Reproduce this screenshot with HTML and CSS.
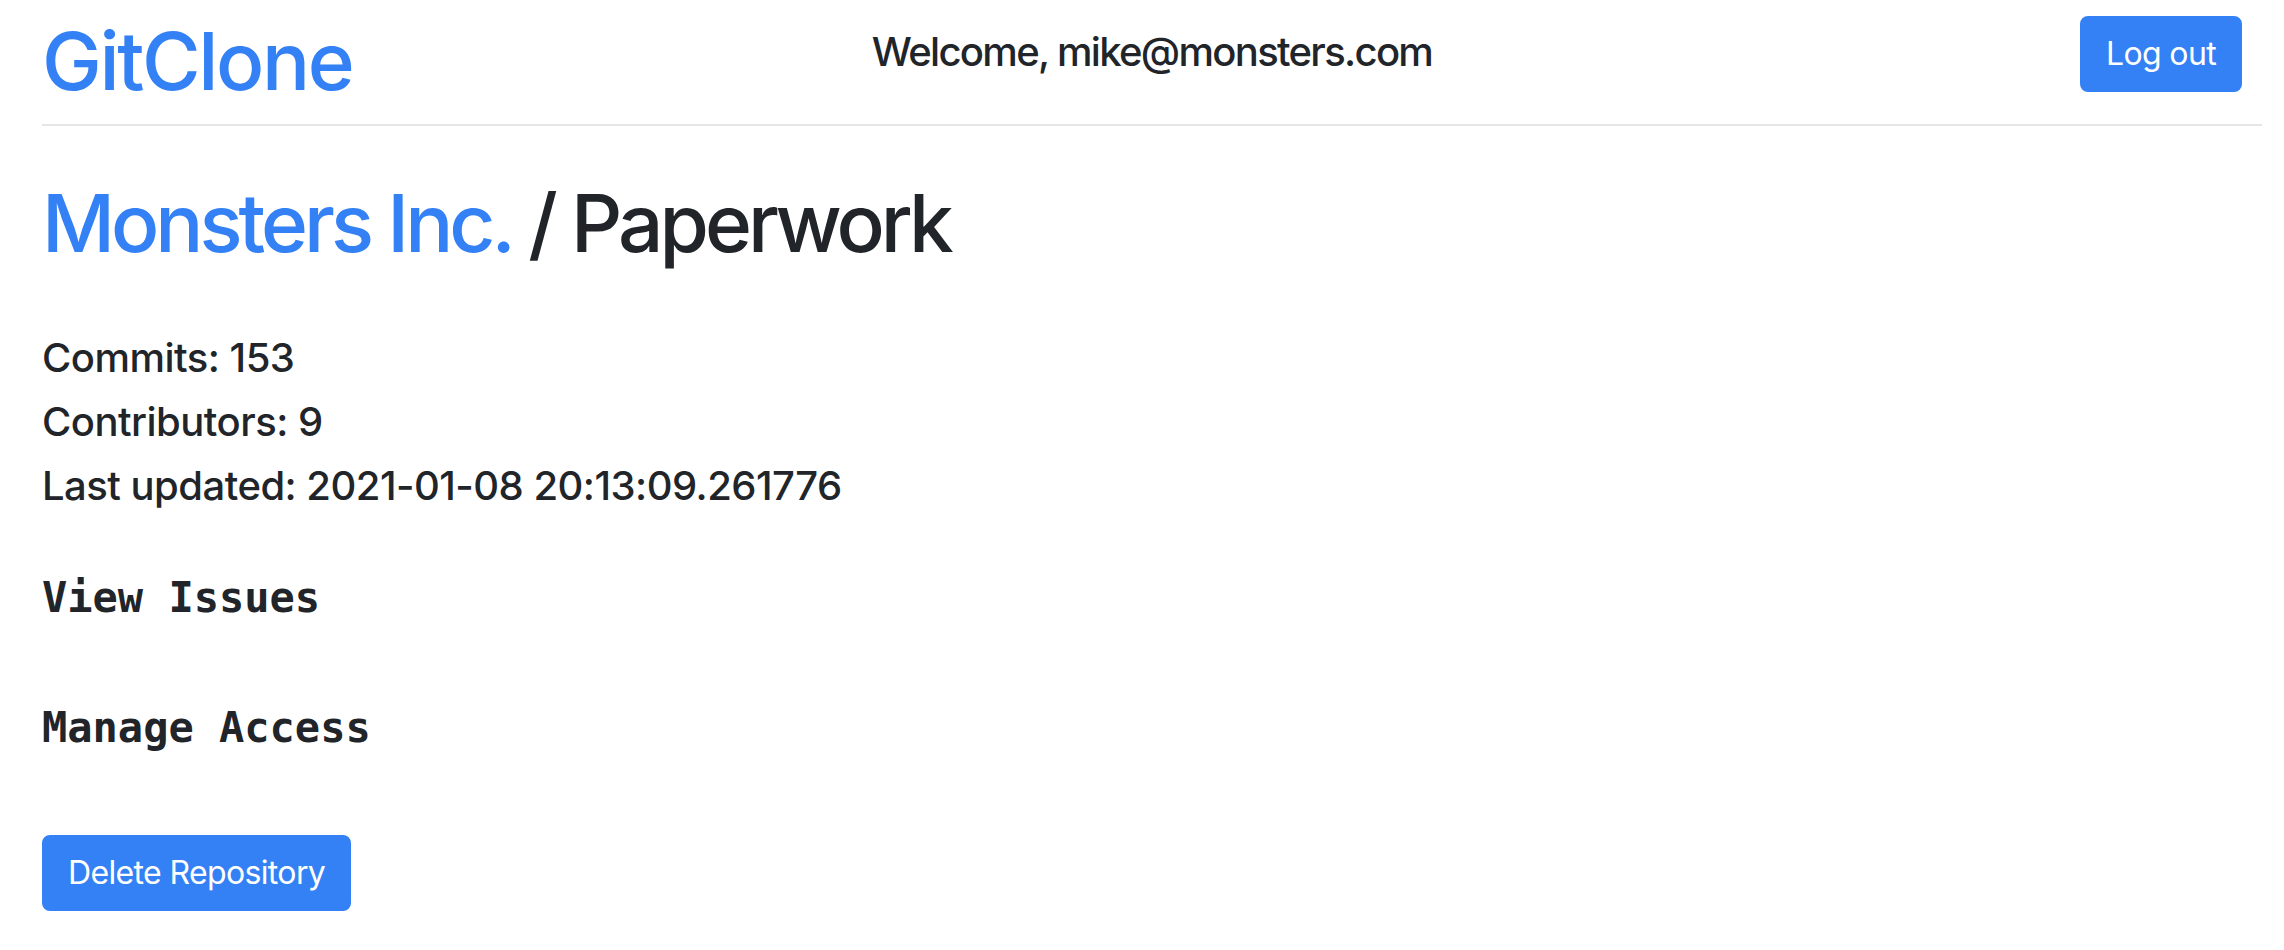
FILE: index.html
```html
<!DOCTYPE html>
<html lang="en">
<head>
<meta charset="utf-8">
<title>GitClone - Paperwork</title>
<link rel="stylesheet" href="styles.css">
</head>
<body>
<div class="page">
  <header class="topbar">
    <h1 class="brand"><a href="#" class="brand-link">GitClone</a></h1>
    <h5 class="welcome">Welcome, mike@monsters.com</h5>
    <div class="actions"><button class="btn" type="button">Log out</button></div>
  </header>
  <hr class="divider">
  <h1 class="repo-title"><a href="#" class="org-link">Monsters Inc.</a> / Paperwork</h1>
  <div class="stats">
    <h5 class="stat">Commits: 153</h5>
    <h5 class="stat">Contributors: 9</h5>
    <h5 class="stat">Last updated: 2021-01-08 20:13:09.261776</h5>
  </div>
  <div class="repo-links">
    <h4 class="repo-link">View Issues</h4>
    <h4 class="repo-link">Manage Access</h4>
  </div>
  <button class="btn btn-delete" type="button">Delete Repository</button>
</div>
</body>
</html>
```

FILE: styles.css
```css
html, body {
  margin: 0;
  padding: 0;
  background: #ffffff;
}

body {
  font-family: Inter, "Noto Sans", "Liberation Sans", sans-serif;
  color: #212529;
}

.page {
  padding: 0 22px 0 42px;
}

h1, h4, h5 {
  margin: 0;
  font-weight: 500;
}

a {
  color: #3381f5;
  text-decoration: none;
}

.topbar {
  display: grid;
  grid-template-columns: 1fr 1fr 1fr;
  align-items: start;
}

.brand {
  font-size: 80px;
  line-height: 96px;
  margin-top: 13px;
  letter-spacing: -0.03em;
}

.welcome {
  font-size: 40px;
  line-height: 48px;
  margin-top: 28px;
  text-align: center;
  letter-spacing: -0.042em;
  white-space: nowrap;
}

.actions {
  display: flex;
  justify-content: flex-end;
  padding-right: 20px;
  margin-top: 16px;
}

.btn {
  font-family: Inter, "Noto Sans", "Liberation Sans", sans-serif;
  font-size: 32px;
  font-weight: 400;
  line-height: 48px;
  letter-spacing: -0.02em;
  color: #ffffff;
  background: #3381f5;
  border: 2px solid #3381f5;
  border-radius: 8px;
  padding: 12px 24px;
  cursor: pointer;
}

.divider {
  margin: 15px 0 0 0;
  border: 0;
  border-top: 2px solid #e6e6e6;
  height: 0;
}

.repo-title {
  font-size: 80px;
  line-height: 96px;
  margin-top: 49px;
  letter-spacing: -0.05em;
}

.stats {
  display: flex;
  flex-direction: column;
  gap: 16px;
  margin-top: 63px;
}

.stat {
  font-size: 40px;
  line-height: 48px;
  letter-spacing: -0.013em;
}

.repo-links {
  display: flex;
  flex-direction: column;
  gap: 80px;
  margin-top: 63px;
}

.repo-link {
  font-family: "DejaVu Sans Mono", "Liberation Mono", monospace;
  font-weight: 700;
  font-size: 42px;
  line-height: 50px;
}

.btn-delete {
  margin-top: 82px;
}
```
